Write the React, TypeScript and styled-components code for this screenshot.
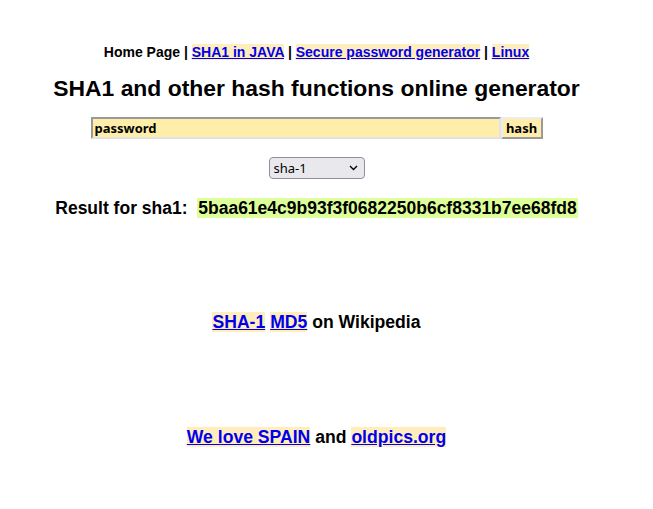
import React from "react";
import styled, { createGlobalStyle } from "styled-components";

const Global = createGlobalStyle`
  html, body { margin: 0; padding: 0; background: #fff; }
  body { font-family: "Liberation Sans", Arial, sans-serif; color: #000; }
`;

const Page = styled.div`
  display: flex;
  flex-direction: column;
  align-items: center;
  padding-top: 44px;
  width: 633px;
`;

const Nav = styled.nav`
  font-size: 14px;
  font-weight: bold;
  line-height: 17px;
  white-space: nowrap;
`;

const Link = styled.a`
  color: #0000ee;
  background: #ffeebb;
  text-decoration: underline;
`;

const Title = styled.h1`
  margin: 13px 0 0;
  font-size: 22.9px;
  line-height: 28px;
  font-weight: bold;
  white-space: nowrap;
`;

const Form = styled.form`
  display: flex;
  flex-direction: column;
  align-items: center;
  margin-top: 15px;
`;

const InputRow = styled.div`
  display: flex;
  align-items: stretch;
  height: 22px;
`;

const TextInput = styled.input`
  box-sizing: border-box;
  width: 410px;
  height: 22px;
  border-style: solid;
  border-width: 2px;
  border-color: #9a9a9a #e2e2e2 #e2e2e2 #9a9a9a;
  background: #ffeeaa;
  font-family: "Noto Sans", "DejaVu Sans", sans-serif;
  font-weight: bold;
  font-size: 13px;
  padding: 0 2px;
  color: #000;
  outline: none;
`;

const HashButton = styled.button`
  box-sizing: border-box;
  height: 22px;
  width: 42px;
  padding: 0;
  border-style: solid;
  border-width: 2px;
  border-color: #ececec #9a9a9a #9a9a9a #ececec;
  background: #ffeeaa;
  font-family: "Noto Sans", "DejaVu Sans", sans-serif;
  font-weight: bold;
  font-size: 13px;
  color: #000;
`;

const SelectWrap = styled.div`
  position: relative;
  margin-top: 18px;
  width: 96px;
  height: 22px;
`;

const Select = styled.select`
  appearance: none;
  box-sizing: border-box;
  width: 96px;
  height: 22px;
  border: 1px solid #8f8f9d;
  border-radius: 4px;
  background: #e9e9ed;
  font-family: "Noto Sans", "DejaVu Sans", sans-serif;
  font-size: 13px;
  color: #000;
  padding: 0 4px;
`;

const Chevron = styled.svg`
  position: absolute;
  right: 7px;
  top: 8px;
  pointer-events: none;
`;

const Result = styled.div`
  margin-top: 18px;
  font-size: 17.5px;
  font-weight: bold;
  line-height: 22px;
  white-space: nowrap;
`;

const HashValue = styled.span`
  background: #ddff99;
  padding: 0 1px;
`;

const Line = styled.div<{ $mt: number }>`
  font-size: 17.6px;
  font-weight: bold;
  line-height: 22px;
  white-space: nowrap;
  margin-top: ${(p) => p.$mt}px;
`;

export default function App() {
  return (
    <>
      <Global />
      <Page>
        <Nav>
          Home Page | <Link href="#">SHA1 in JAVA</Link> |{" "}
          <Link href="#">Secure password generator</Link> |{" "}
          <Link href="#">Linux</Link>
        </Nav>
        <Title>SHA1 and other hash functions online generator</Title>
        <Form onSubmit={(e) => e.preventDefault()}>
          <InputRow>
            <TextInput defaultValue="password" />
            <HashButton type="submit">hash</HashButton>
          </InputRow>
          <SelectWrap>
            <Select defaultValue="sha-1">
              <option value="sha-1">sha-1</option>
              <option value="md5">md5</option>
            </Select>
            <Chevron width="9" height="6" viewBox="0 0 9 6">
              <path d="M1 1 L4.5 4.5 L8 1" fill="none" stroke="#000" strokeWidth="1.4" />
            </Chevron>
          </SelectWrap>
        </Form>
        <Result>
          Result for sha1:&nbsp; <HashValue>5baa61e4c9b93f3f0682250b6cf8331b7ee68fd8</HashValue>
        </Result>
        <Line $mt={92}>
          <Link href="#">SHA-1</Link> <Link href="#">MD5</Link> on Wikipedia
        </Line>
        <Line $mt={93}>
          <Link href="#">We love SPAIN</Link> and <Link href="#">oldpics.org</Link>
        </Line>
      </Page>
    </>
  );
}
